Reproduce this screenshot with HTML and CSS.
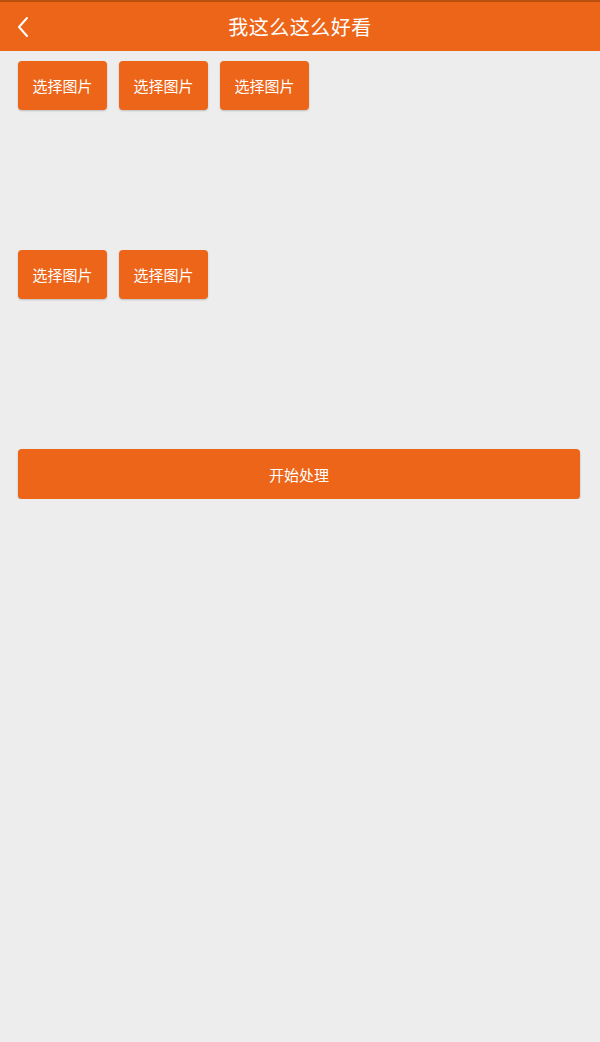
FILE: index.html
```html
<!DOCTYPE html>
<html lang="zh">
<head>
<meta charset="utf-8">
<title>我这么这么好看</title>
<link rel="stylesheet" href="styles.css">
</head>
<body>
<header class="topbar">
  <span class="back" aria-label="返回">
    <svg width="14" height="22" viewBox="0 0 14 22"><path d="M11 2 L3 11 L11 20" fill="none" stroke="#fff" stroke-width="2" stroke-linecap="round" stroke-linejoin="round"/></svg>
  </span>
  <h1 class="title">我这么这么好看</h1>
</header>
<main class="content">
  <div class="row">
    <button class="pick">选择图片</button>
    <button class="pick">选择图片</button>
    <button class="pick">选择图片</button>
  </div>
  <div class="row row-second">
    <button class="pick">选择图片</button>
    <button class="pick">选择图片</button>
  </div>
  <button class="start">开始处理</button>
</main>
</body>
</html>
```
FILE: styles.css
```css
html, body {
  margin: 0;
  padding: 0;
  background: #ededed;
  font-family: "Noto Sans CJK SC", "Noto Sans", sans-serif;
}
.topbar {
  position: relative;
  height: 51px;
  box-sizing: border-box;
  border-top: 2px solid #b8500f;
  background: #ec6519;
  display: flex;
  align-items: center;
  justify-content: center;
}
.back {
  position: absolute;
  left: 16px;
  top: 14px;
  display: flex;
}
.title {
  margin: 0;
  color: #fff;
  font-size: 20px;
  font-weight: 400;
  letter-spacing: 0.5px;
}
.content {
  padding: 10px 18px 0 18px;
  display: flex;
  flex-direction: column;
}
.row {
  display: flex;
  gap: 12px;
}
.row-second {
  margin-top: 140px;
}
.pick {
  width: 89px;
  height: 49px;
  border: none;
  border-radius: 4px;
  background: #ec6519;
  color: #fff;
  font-family: inherit;
  font-size: 15px;
  font-weight: 400;
  padding: 0;
  box-shadow: 0 1px 2px rgba(0,0,0,0.2);
}
.start {
  margin-top: 150px;
  width: 562px;
  height: 50px;
  border: none;
  border-radius: 4px;
  background: #ec6519;
  color: #fff;
  font-family: inherit;
  font-size: 15px;
  font-weight: 400;
  padding: 0;
  box-shadow: 0 1px 2px rgba(0,0,0,0.25);
}
```
